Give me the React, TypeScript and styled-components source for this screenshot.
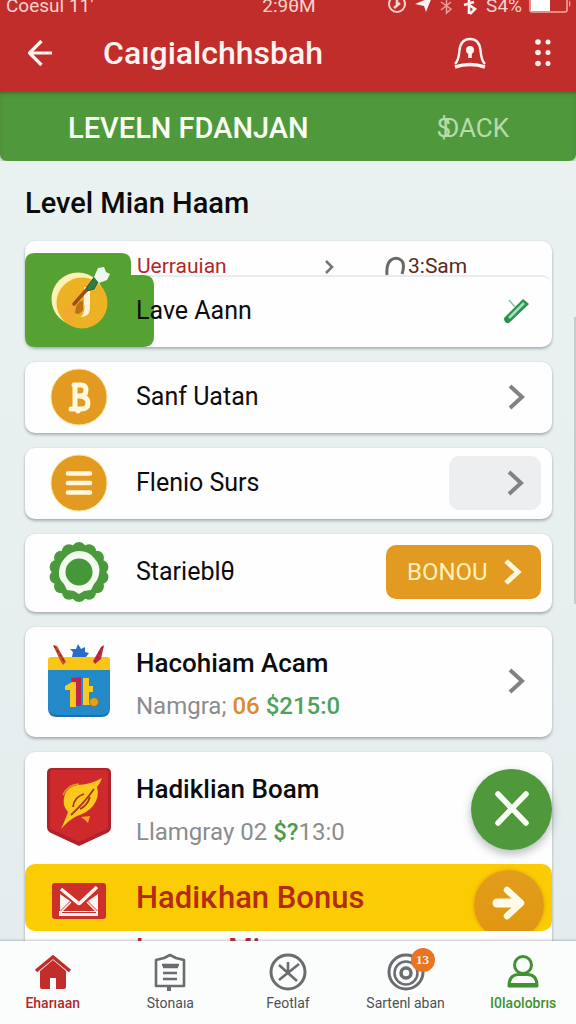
import React from "react";
import styled, { createGlobalStyle } from "styled-components";

const color = {
  red: "#c12d2b",
  green: "#50983c",
  amber: "#e29a20",
  yellow: "#fbcc04",
  grey: "#808284",
  ink: "#0c0c0c",
};

const Global = createGlobalStyle`
  * { box-sizing: border-box; }
  body { margin: 0; background: #e6edec; font-family: Roboto, "Liberation Sans", sans-serif; color: ${color.ink}; }
  h1, h2, h3, p { margin: 0; }
  button { font: inherit; border: 0; padding: 0; background: none; color: inherit; cursor: pointer; }
  a { color: inherit; text-decoration: none; }
  svg { display: block; flex: none; }
`;

const Screen = styled.div`
  position: relative;
  display: flex;
  flex-direction: column;
  height: 100vh;
  overflow: hidden;
`;

const Header = styled.header`
  flex: none;
  background: ${color.red};
  color: #fff3f1;
`;

const StatusBar = styled.div`
  display: grid;
  grid-template-columns: 1fr auto 1fr;
  grid-template-rows: 17px;
  align-items: end;
  height: 17px;
  padding: 0 4px 0 6px;
  overflow: hidden;
  font-size: 19px;
  line-height: 22px;
  color: #f7d3cf;
`;

const StatusGroup = styled.div`
  display: flex;
  align-items: flex-end;
  justify-content: flex-end;
  gap: 7px;
`;

const AppBar = styled.div`
  display: flex;
  align-items: center;
  height: 74px;
  padding: 0 24px 2px 26px;
`;

const AppTitle = styled.h1`
  flex: 1;
  margin-left: 49px;
  font-size: 32px;
  line-height: 40px;
  font-weight: 500;
`;

const BarActions = styled.div`
  display: flex;
  align-items: center;
  gap: 47px;
`;

const Banner = styled.div`
  flex: none;
  display: flex;
  align-items: center;
  justify-content: space-between;
  height: 70px;
  padding: 4px 67px 0 68px;
  border-radius: 0 0 7px 7px;
  background: ${color.green};
  box-shadow: inset 0 4px 4px -2px rgba(60, 50, 10, 0.5), 0 2px 3px rgba(60, 90, 80, 0.35);
`;

const BannerTitle = styled.h2`
  font-size: 29px;
  line-height: 36px;
  font-weight: 500;
  color: #f8fff2;
`;

const BannerAction = styled.button`
  && {
    font-size: 26px;
    line-height: 36px;
    color: #b5dcaa;
  }
`;

const Currency = styled.span`
  margin-right: -9px;
`;

const Content = styled.main`
  flex: 1;
  min-height: 0;
  overflow: hidden auto;
  scrollbar-width: none;
  padding: 22px 24px 0 25px;
  background: linear-gradient(180deg, #eaf2f1, #e4eced);
`;

const SectionTitle = styled.h2`
  margin-bottom: 18px;
  font-size: 29px;
  line-height: 40px;
  font-weight: 500;
`;

const List = styled.div`
  display: flex;
  flex-direction: column;
  gap: 15px;
`;

const Card = styled.section`
  position: relative;
  border-radius: 10px;
  background: #fefefe;
  box-shadow: 0 2px 3px rgba(70, 80, 90, 0.38), 0 0 2px rgba(70, 80, 90, 0.12);
`;

const Row = styled.div<{ $height: number; $end?: number }>`
  display: grid;
  grid-template-columns: 111px 1fr auto;
  align-items: center;
  min-height: ${(p) => p.$height}px;
  padding: 0 ${(p) => p.$end ?? 11}px 2px 0;
`;

const IconCell = styled.div`
  display: flex;
  justify-content: center;
  padding-right: 3px;
`;

const Label = styled.h3`
  position: relative;
  grid-column: 2;
  font-size: 25px;
  line-height: 32px;
  font-weight: 400;
`;

const Details = styled.div`
  display: flex;
  flex-direction: column;
  gap: 11px;
  padding-top: 6px;
`;

const DetailTitle = styled(Label)`
  font-size: 26px;
  font-weight: 500;
`;

const Meta = styled.p`
  font-size: 24px;
  line-height: 32px;
  color: #8b8c8e;
`;

const Tint = styled.span<{ $color: string }>`
  color: ${(p) => p.$color};
  font-weight: 500;
`;

const PeekRow = styled.div`
  display: grid;
  grid-template-columns: 187px 61px 1fr;
  height: 34px;
  padding: 12px 11px 0 112px;
  overflow: hidden;
  font-size: 21px;
  line-height: 26px;
`;

const PeekName = styled.span`
  color: #b3262b;
`;

const PeekTime = styled.span`
  display: flex;
  gap: 2px;
  color: #5a2a20;
`;

const FrontCard = styled.div`
  border-top: 2px solid #e9ecee;
  border-radius: 10px;
`;

const Artwork = styled.svg`
  position: absolute;
  left: 0;
  bottom: 0;
`;

const ArrowButton = styled.button`
  display: flex;
  justify-content: center;
  align-items: center;
  width: 48px;
  height: 54px;
`;

const SoftButton = styled(ArrowButton)`
  && {
    justify-content: flex-end;
    width: 92px;
    padding-right: 14px;
    border-radius: 10px;
    background: #edeeef;
  }
`;

const BonusButton = styled.button`
  && {
    display: flex;
    align-items: center;
    justify-content: space-between;
    width: 155px;
    height: 54px;
    padding: 0 17px 0 21px;
    border-radius: 10px;
    background: ${color.amber};
    color: #fff1bd;
    font-size: 24px;
  }
`;

const CloseButton = styled.button`
  && {
    display: flex;
    align-items: center;
    justify-content: center;
    width: 81px;
    height: 81px;
    margin-top: 4px;
    border-radius: 50%;
    background: ${color.green};
    box-shadow: 0 4px 10px rgba(40, 60, 50, 0.35);
  }
`;

const Promo = styled.div`
  display: grid;
  grid-template-columns: 111px 1fr auto;
  grid-template-rows: 67px;
  align-items: center;
  height: 67px;
  padding-right: 8px;
  overflow: hidden;
  border-radius: 10px;
  background: ${color.yellow};
`;

const PromoIcon = styled(IconCell)`
  padding-top: 7px;
`;

const PromoTitle = styled.h3`
  font-size: 31px;
  line-height: 40px;
  font-weight: 500;
  color: #b42a12;
`;

const PromoButton = styled.button`
  && {
    display: flex;
    align-items: center;
    justify-content: center;
    align-self: start;
    width: 70px;
    height: 70px;
    margin-top: 6px;
    padding-bottom: 5px;
    border-radius: 50%;
    background: linear-gradient(#e39c1c, #df9612);
    box-shadow: 0 0 4px rgba(180, 110, 0, 0.45);
  }
`;

const NextTitle = styled.h3`
  padding: 0 0 16px 111px;
  font-size: 28px;
  line-height: 36px;
  font-weight: 500;
  color: #b3242a;
`;

const ScrollThumb = styled.div`
  position: absolute;
  top: 31%;
  right: 0;
  width: 2px;
  height: 28%;
  background: #c6cccc;
`;

const Nav = styled.nav`
  flex: none;
  display: grid;
  grid-template-columns: repeat(5, 1fr);
  height: 83px;
  margin: 0 -6px;
  padding-top: 12px;
  background: #fbfdfd;
  box-shadow: 0 -1px 2px rgba(90, 100, 110, 0.35);
  position: relative;
`;

const NavItem = styled.a<{ $color?: string }>`
  display: flex;
  flex-direction: column;
  align-items: center;
  gap: 2px;
  font-size: 14px;
  line-height: 20px;
  font-weight: ${(p) => (p.$color ? 500 : 400)};
  color: ${(p) => p.$color ?? "#4e5153"};
`;

const NavIcon = styled.span`
  position: relative;
`;

const Badge = styled.span`
  position: absolute;
  top: -5px;
  left: 24px;
  width: 24px;
  height: 24px;
  border-radius: 50%;
  background: #ea7420;
  color: #fff4e8;
  font: 700 13px/24px "Liberation Serif", serif;
  text-align: center;
`;

const Chevron = ({ stroke = color.grey, w = 4 }: { stroke?: string; w?: number }) => (
  <svg width="22" height="28" viewBox="0 0 22 28" fill="none" stroke={stroke} strokeWidth={w}>
    <path d="M4 3 L16 14 L4 25" />
  </svg>
);

const BackIcon = () => (
  <svg width="28" height="30" viewBox="0 0 28 30" fill="none" stroke="#fff3f1" strokeWidth="3.2">
    <path d="M15.5 3 L3.5 15 L15.5 27 M3.5 15 H26" strokeLinejoin="round" />
  </svg>
);

const BellIcon = () => (
  <svg width="34" height="34" viewBox="0 0 34 34" fill="none" stroke="#fff3f1" strokeWidth="2.4">
    <path d="M2 28 C6 24 6 19 6.500 14 C7.500 6 12 3 17 3 C22 3 26.500 6 27.500 14 C28 19 28 24 32 28" />
    <path d="M2 31 Q17 26 32 31" strokeWidth="3.500" />
    <circle cx="17" cy="14" r="4" fill="#fff3f1" stroke="none" />
    <path d="M17 14 V22" strokeWidth="3.600" />
  </svg>
);

const DotsIcon = () => (
  <svg width="18" height="30" viewBox="0 0 18 30" fill="#fff3f1">
    {[4, 14.5, 25.5].map((y) => (
      <g key={y}>
        <circle cx="4" cy={y} r="2.800" />
        <circle cx="14" cy={y} r="2.500" />
      </g>
    ))}
  </svg>
);

const StatusIcons = () => (
  <svg width="92" height="18" viewBox="0 0 92 18" fill="none" stroke="#f7d3cf" strokeWidth="2">
    <circle cx="10" cy="5" r="8" />
    <path d="M10 0 V6 M7 9 L13 4" strokeWidth="2.600" />
    <path d="M28 5 L45 -2 L39 13 L37 7 Z" fill="#fff3f1" stroke="none" />
    <path d="M54 3 L64 10 L59.500 14 V-3 M54 11 L64 3" strokeWidth="1.500" opacity=".7" />
    <path d="M77 6 L87 3 M82 -2 V15 M82 6 L88 10 L83 15" strokeWidth="2.600" stroke="#fff3f1" />
  </svg>
);

const BatteryIcon = () => (
  <svg width="43" height="17" viewBox="0 0 43 17">
    <path d="M1 -4 V10 Q1 12 3 12 H36 Q38 12 38 10 V-4" fill="none" stroke="#f3aba5" strokeWidth="1.500" />
    <path d="M2 -2 H21 V11 H2 Z" fill="#fff" />
    <path d="M40 0 Q43 4 40 7 Z" fill="#f3aba5" />
  </svg>
);

const CoinArtwork = () => (
  <Artwork width="129" height="94" viewBox="0 0 129 94" aria-hidden="true">
    <path
      d="M10 0 H96 Q106 0 106 10 V22 H118 Q129 22 129 33 V83 Q129 94 118 94 H10 Q0 94 0 83 V10 Q0 0 10 0 Z"
      fill="#55a233"
    />
    <circle cx="53" cy="46" r="26.500" fill="#fdf1b4" />
    <circle cx="57" cy="50" r="25.500" fill="#ecb223" />
    <path d="M49 72 Q39 68 37 57 L50 49 Z" fill="#f3a92f" />
    <path d="M59 34 H65 V56 Q64 64 56 64 Q61 58 59 50 Z" fill="#fff4d2" />
    <path d="M58 47 Q50 50 50 60 Q54 63 58 57 Z" fill="#b97411" />
    <path d="M49 51 L64 34" stroke="#a04b1c" strokeWidth="3.500" strokeLinecap="round" />
    <path d="M62 34 L70 23 L74 27 L69 36 L62 38 Z" fill="#2f7d45" stroke="#245c38" />
    <path d="M69 24 L73 15 L79 14 L81 19 L85 21 L82 27 L74 30 Z" fill="#edf8ea" />
  </Artwork>
);

const BitcoinIcon = () => (
  <svg width="58" height="58" viewBox="0 0 58 58" fill="none" stroke="#fff8dc" strokeLinecap="round" strokeLinejoin="round">
    <circle cx="29" cy="29" r="28" fill={color.amber} stroke="#fbe38e" strokeWidth="1" />
    <path
      d="M24 17 H31 Q36 17 36 22 Q36 28 30 28 H25 M30 28 Q38 29 38 35 Q38 41 31 41 H21 M25 17 V41 M28 41 V43"
      strokeWidth="5"
    />
  </svg>
);

const MenuIcon = () => (
  <svg width="58" height="58" viewBox="0 0 58 58">
    <circle cx="29" cy="29" r="28" fill={color.amber} stroke="#fbe38e" />
    <path d="M18 19.500 H40 M18 29 H40 M18 38.500 H40" stroke="#fff8dc" strokeWidth="4.600" strokeLinecap="round" />
  </svg>
);

const petals = Array.from({ length: 14 }, (_, i) => (i * 2 * Math.PI) / 14 - Math.PI / 2);

const GearIcon = () => (
  <svg width="62" height="62" viewBox="0 0 62 62">
    <g fill="#4a9a3c">
      <circle cx="31" cy="31" r="27" />
      {petals.map((a) => (
        <circle key={a} cx={31 + 23 * Math.cos(a)} cy={31 + 23 * Math.sin(a)} r="7" />
      ))}
    </g>
    <path
      d="M31 10 Q41 10 46 17 Q53 24 51 33 Q50 39 46 43 L43 49 L36 50 L31 53 L26 50 L19 49 L16 43 Q10 38 11 30 Q12 22 17 17 Q23 10 31 10 Z"
      fill="#f3fbf0"
    />
    <circle cx="31" cy="31" r="13.500" fill="#45983a" />
  </svg>
);

const GiftIcon = () => (
  <svg width="64" height="74" viewBox="0 0 64 74">
    <path d="M1 22 H63 V64 Q63 73 54 73 H10 Q1 73 1 64 Z" fill="#1c6fae" />
    <path d="M1 22 H63 V62 Q63 71 54 71 H10 Q1 71 1 62 Z" fill="#2389c8" />
    <path d="M4 13 H60 Q63 13 63 16 V26 H1 V16 Q1 13 4 13 Z" fill="#fac514" />
    <path d="M25 13 L26 8 L23 5 L29 5 L31 0 L34 5 L38 3 L38 8 L42 9 L39 13 Z" fill="#286ec4" />
    <path d="M6 1 L10 2 L19 18 L16 21 L12 14 Z" fill="#cc4a2c" />
    <path d="M57 1 L54 3 L46 17 L48 20 L54 15 Z" fill="#c7283d" />
    <path d="M7 2 L18 18 M56 3 L48 18" stroke="#8e2a3c" strokeWidth="1.400" strokeDasharray="3 2" />
    <path d="M24 34 L34 33 V62 H28 Z" fill="#c0264d" />
    <path d="M18 42 L25 38 H29 V63 H23 V46 H18 Z" fill="#fbc91e" />
    <path d="M36 34 H42 V42 H46 V48 H42 V56 L46 61 H36 Z" fill="#fbc91e" />
    <circle cx="47" cy="58" r="4.500" fill="#dba41f" stroke="#8f7330" />
  </svg>
);

const ShieldIcon = () => (
  <svg width="66" height="80" viewBox="0 0 66 80">
    <path d="M6 1 H60 Q65 1 65 6 V60 Q65 64 61 66 L33 79 L5 66 Q1 64 1 60 V6 Q1 1 6 1 Z" fill="#b02228" />
    <path d="M7 3 H59 Q62 3 62 7 V59 Q62 62 59 63 L33 75 L7 63 Q4 62 4 59 V7 Q4 3 7 3 Z" fill="#ce292d" />
    <path
      d="M56 11 Q54 17 51 20 Q54 30 47 39 Q41 46 31 49 Q24 52 15 62 Q20 51 22 45 Q15 38 19 27 Q22 20 31 18 Q44 18 56 11 Z"
      fill="#fcc81d"
    />
    <path d="M48 22 Q39 35 25 48 M44 30 Q41 39 34 42 M38 27 Q28 30 27 40" fill="none" stroke="#a3341d" strokeWidth="1.800" />
    <path d="M17 28 Q22 17 33 17" fill="none" stroke="#e98f23" strokeWidth="1.500" />
    <path d="M35 50 L44 49 L42 56 L39 53 Z" fill="#f3a61f" />
  </svg>
);

const MailIcon = () => (
  <svg width="56" height="38" viewBox="0 0 56 38">
    <rect x="1" y="1" width="54" height="36" rx="3" fill="#cd2f2b" />
    <path d="M9 12 L19 19 L9 29 Z M47 12 L37 19 L47 29 Z" fill="#fff4f0" />
    <path d="M10 30 L20 20 M46 30 L36 20" stroke="#fff4f0" strokeWidth="1.500" />
    <path d="M8 29 H47 V34 H8 Z" fill="#fff4f0" />
    <path d="M11 30.500 H45" stroke="#cd2f2b" strokeWidth="1" />
    <path d="M10 7 L27 21 Q28 22 29 21 L46 5" fill="none" stroke="#fff4f0" strokeWidth="3.500" />
  </svg>
);

const PencilIcon = () => (
  <svg width="28" height="28" viewBox="0 0 28 28">
    <path d="M1 21 L20 2 L26 7 L6 26 Q1 27 1 21 Z" fill="#2a9150" />
    <path d="M6 21 L21 6" stroke="#a9e0bb" strokeWidth="2.500" />
    <path d="M6 3 L12 10" stroke="#8cc5a0" strokeWidth="1.600" />
  </svg>
);

const CrossIcon = () => (
  <svg width="38" height="38" viewBox="0 0 38 38" stroke="#f8fff2" strokeWidth="5.500" strokeLinecap="round">
    <path d="M5 4 L33 33 M33 4 L5 33" />
  </svg>
);

const ForwardIcon = () => (
  <svg width="34" height="36" viewBox="0 0 34 36" fill="none" stroke="#fffbe6" strokeLinecap="round">
    <path d="M15 5 L29 18 L15 31" strokeWidth="6.500" strokeLinejoin="round" />
    <path d="M5 18 H27" strokeWidth="9" />
  </svg>
);

const ArcIcon = () => (
  <svg width="21" height="22" viewBox="0 0 21 22" fill="none" stroke="#6c6868" strokeWidth="3">
    <path d="M2 22 Q1 11 6 7 Q12 3 17 8 Q20 12 17 21" />
  </svg>
);

const PeekChevron = () => (
  <svg width="12" height="22" viewBox="0 0 12 22" fill="none" stroke="#777" strokeWidth="2.600">
    <path d="M2 8 L8 14 L2 20" />
  </svg>
);

const HomeIcon = () => (
  <svg width="38" height="38" viewBox="0 0 38 38">
    <path d="M6 18 L19 7 L32 18 V34 Q32 36 30 36 H22 V25 H16 V36 H8 Q6 36 6 34 Z" fill={color.red} />
    <path d="M2 18 L19 4 L36 18" fill="none" stroke={color.red} strokeWidth="3.500" />
  </svg>
);

const NotesIcon = () => (
  <svg width="38" height="38" viewBox="0 0 38 38" fill="none" stroke="#6a6d6f" strokeWidth="2.600">
    <path d="M5 7 L13 5 L19 2 L25 5 L33 7 V33 H5 Z" strokeLinejoin="round" />
    <path d="M11 12 H28 M12 14 H27 M12 20 H26 M12 26 H26" />
    <path d="M18 33 V38" strokeWidth="4" />
  </svg>
);

const WheelIcon = () => (
  <svg width="38" height="38" viewBox="0 0 38 38" fill="none" stroke="#6a6d6f">
    <circle cx="19" cy="19" r="17" strokeWidth="3" />
    <path d="M19 9 V20 M10 12 L28 28 M30 11 L10 27" strokeWidth="2.600" />
  </svg>
);

const TargetIcon = () => (
  <svg width="38" height="38" viewBox="0 0 38 38" fill="none" stroke="#6a6d6f">
    <circle cx="19" cy="19" r="17" strokeWidth="3" />
    <circle cx="19" cy="20" r="11.500" strokeWidth="2.500" />
    <circle cx="19" cy="20" r="5" strokeWidth="3.500" />
  </svg>
);

const UserIcon = () => (
  <svg width="38" height="38" viewBox="0 0 38 38" fill="none" stroke="#3f922f" strokeWidth="3">
    <circle cx="19" cy="12" r="8.500" />
    <path d="M5 33 Q5 22 14 21.500 H24 Q33 22 33 33 Z" strokeLinejoin="round" />
    <path d="M5 30 H33 V34 H5 Z" fill="#3f922f" stroke="none" />
  </svg>
);

const navItems = [
  { label: "Eharıaan", icon: <HomeIcon />, tint: "#b3262b" },
  { label: "Stonaıa", icon: <NotesIcon /> },
  { label: "Feotlaf", icon: <WheelIcon /> },
  { label: "Sartenl aban", icon: <TargetIcon />, badge: "13" },
  { label: "I0laolobrıs", icon: <UserIcon />, tint: "#3f922f" },
];

export default function App() {
  return (
    <Screen>
      <Global />
      <Header>
        <StatusBar>
          <span>Coesul 11'</span>
          <span>2:9θM</span>
          <StatusGroup>
            <StatusIcons />
            <span>S4%</span>
            <BatteryIcon />
          </StatusGroup>
        </StatusBar>
        <AppBar>
          <button aria-label="Back"><BackIcon /></button>
          <AppTitle>Caıgialchhsbah</AppTitle>
          <BarActions>
            <button aria-label="Notifications"><BellIcon /></button>
            <button aria-label="More"><DotsIcon /></button>
          </BarActions>
        </AppBar>
      </Header>

      <Banner>
        <BannerTitle>LEVELN FDANJAN</BannerTitle>
        <BannerAction><Currency>$</Currency>DACK</BannerAction>
      </Banner>

      <Content>
        <SectionTitle>Level Mian Haam</SectionTitle>
        <List>
          <Card>
            <PeekRow>
              <PeekName>Uerrauian</PeekName>
              <PeekChevron />
              <PeekTime><ArcIcon />3:Sam</PeekTime>
            </PeekRow>
            <CoinArtwork />
            <FrontCard>
              <Row $height={70}>
                <Label>Lave Aann</Label>
                <ArrowButton aria-label="Edit"><PencilIcon /></ArrowButton>
              </Row>
            </FrontCard>
          </Card>

          <Card>
            <Row $height={71}>
              <IconCell><BitcoinIcon /></IconCell>
              <Label>Sanf Uatan</Label>
              <ArrowButton aria-label="Open"><Chevron /></ArrowButton>
            </Row>
          </Card>

          <Card>
            <Row $height={71}>
              <IconCell><MenuIcon /></IconCell>
              <Label>Flenio Surs</Label>
              <SoftButton aria-label="Open"><Chevron /></SoftButton>
            </Row>
          </Card>

          <Card>
            <Row $height={78}>
              <IconCell><GearIcon /></IconCell>
              <Label>Starieblθ</Label>
              <BonusButton>BONOU<Chevron stroke="#fff8dc" w={5} /></BonusButton>
            </Row>
          </Card>

          <Card>
            <Row $height={110}>
              <IconCell><GiftIcon /></IconCell>
              <Details>
                <DetailTitle>Hacohiam Acam</DetailTitle>
                <Meta>
                  Namgra; <Tint $color="#dd8a2a">06</Tint> <Tint $color="#4ea35a">$215:0</Tint>
                </Meta>
              </Details>
              <ArrowButton aria-label="Open"><Chevron /></ArrowButton>
            </Row>
          </Card>

          <Card>
            <Row $height={112} $end={0}>
              <IconCell><ShieldIcon /></IconCell>
              <Details>
                <DetailTitle>Hadiklian Boam</DetailTitle>
                <Meta>
                  Llamgray 02 <Tint $color="#4c9a48">$?</Tint>13:0
                </Meta>
              </Details>
              <CloseButton aria-label="Close"><CrossIcon /></CloseButton>
            </Row>
            <Promo>
              <PromoIcon><MailIcon /></PromoIcon>
              <PromoTitle>Hadiĸhan Bonus</PromoTitle>
              <PromoButton aria-label="Go to bonus"><ForwardIcon /></PromoButton>
            </Promo>
            <NextTitle>Laman Mian</NextTitle>
          </Card>
        </List>
      </Content>

      <ScrollThumb />

      <Nav>
        {navItems.map((item) => (
          <NavItem key={item.label} href="#" $color={item.tint}>
            <NavIcon>
              {item.icon}
              {item.badge && <Badge>{item.badge}</Badge>}
            </NavIcon>
            {item.label}
          </NavItem>
        ))}
      </Nav>
    </Screen>
  );
}
